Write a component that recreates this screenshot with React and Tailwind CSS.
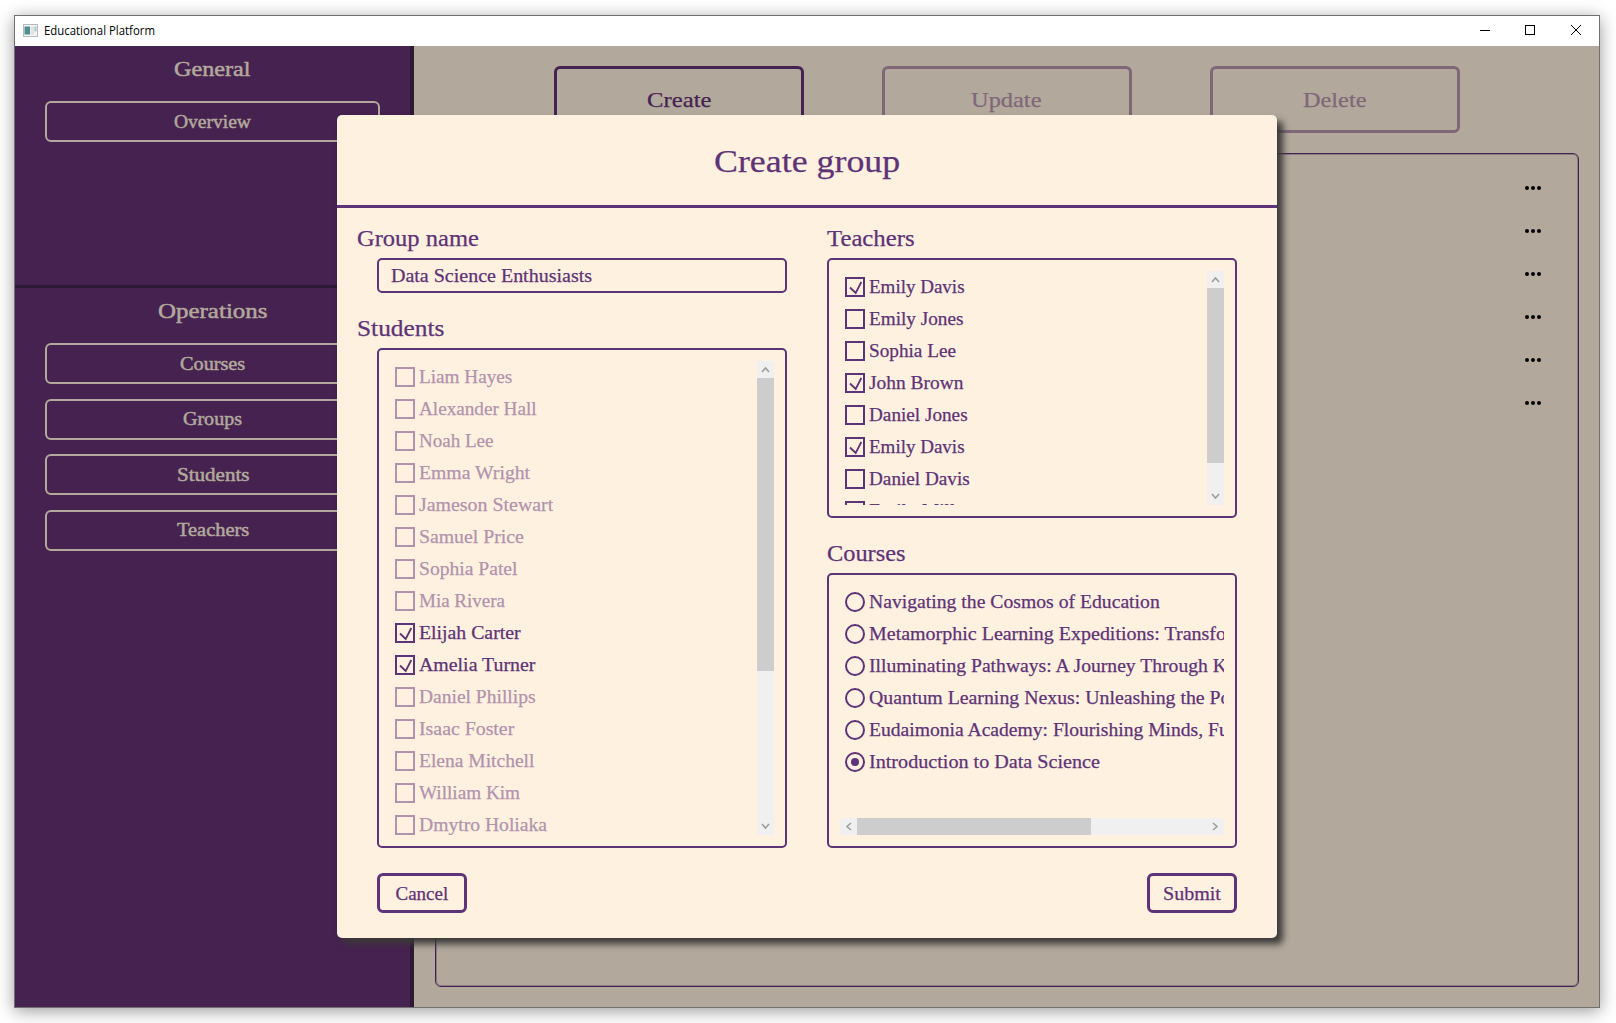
import { useLayoutEffect, useRef, useState } from 'react';

const students = [
  ['Liam Hayes', 93], ['Alexander Hall', 118], ['Noah Lee', 74], ['Emma Wright', 111],
  ['Jameson Stewart', 134], ['Samuel Price', 105], ['Sophia Patel', 99], ['Mia Rivera', 86],
  ['Elijah Carter', 102, true], ['Amelia Turner', 116, true], ['Daniel Phillips', 116],
  ['Isaac Foster', 95], ['Elena Mitchell', 115], ['William Kim', 101], ['Dmytro Holiaka', 128],
];

const teachers = [
  ['Emily Davis', 96, true], ['Emily Jones', 94], ['Sophia Lee', 87], ['John Brown', 94, true],
  ['Daniel Jones', 99], ['Emily Davis', 96, true], ['Daniel Davis', 101], ['Emily Miller', 102],
];

const courses = [
  ['Navigating the Cosmos of Education', 291],
  ['Metamorphic Learning Expeditions: Transforming', 405],
  ['Illuminating Pathways: A Journey Through Knowledge', 434],
  ['Quantum Learning Nexus: Unleashing the Power', 391],
  ['Eudaimonia Academy: Flourishing Minds, Futures', 398],
  ['Introduction to Data Science', 231, true],
];

const operations = [['Courses', 65], ['Groups', 59], ['Students', 72], ['Teachers', 72]];

const outlineButton = 'flex h-10 w-[90px] items-center justify-center rounded-[6px] border-3 border-[#5e3377]';
const actionButton = 'flex h-[67px] w-[250px] items-center justify-center rounded-[6px] border-3 border-current';

/* One line of text, set wider or narrower so that it fills w pixels. */
function Fit({ children, w, className = 'text-[19px] leading-6 pb-px' }) {
  const ref = useRef(null);
  const [scale, setScale] = useState(1);
  useLayoutEffect(() => {
    setScale(w / ref.current.offsetWidth);
  }, [w, children]);
  return (
    <span className={`block shrink-0 whitespace-nowrap ${className}`} style={{ width: w }}>
      <span ref={ref} className="inline-block origin-left" style={{ transform: `scaleX(${scale})` }}>
        {children}
      </span>
    </span>
  );
}

function Chevron({ className = '' }) {
  return (
    <svg viewBox="0 0 17 17" className={`size-[17px] shrink-0 fill-none stroke-[#9b9b9b] ${className}`} strokeWidth="1.5">
      <path d="M5 11 L8.5 7 L12 11" />
    </svg>
  );
}

function CheckRow({ row, dim, radio }) {
  const [label, w, on] = row;
  return (
    <div className={`flex h-8 shrink-0 items-center gap-1 ${dim && !on ? 'text-[#b193ae]' : 'text-[#5e3377]'}`}>
      <span className={`flex size-5 shrink-0 items-center justify-center border-2 border-current ${radio ? 'rounded-full' : ''}`}>
        {on && radio && <span className="size-2 rounded-full bg-current" />}
        {on && !radio && (
          <svg viewBox="0 0 16 16" className="size-4 fill-none stroke-current" strokeWidth="1.8">
            <path d="M3 8.5 L8.7 14 L14.3 3" />
          </svg>
        )}
      </span>
      <Fit w={w}>{label}</Fit>
    </div>
  );
}

function VScroll({ thumb }) {
  return (
    <div className="flex w-[17px] shrink-0 flex-col bg-[#f0f0f0]">
      <Chevron />
      <div className={`bg-[#cdcdcd] ${thumb}`} />
      <Chevron className="mt-auto rotate-180" />
    </div>
  );
}

function Label({ children, w }) {
  return (
    <div className="flex h-[26px] items-center">
      <Fit w={w} className="pt-[2px] text-[22.5px] leading-[26px]">{children}</Fit>
    </div>
  );
}

function SideButton({ children, w }) {
  return (
    <div className="flex h-[41px] w-[335px] items-center justify-center rounded-[6px] border-2 border-[#b2a99c]">
      <Fit w={w} className="text-[19px] leading-6">{children}</Fit>
    </div>
  );
}

function Modal() {
  return (
    <div className="absolute top-[115px] left-[337px] flex h-[823px] w-[940px] flex-col rounded-[5px] bg-[#fff1df] text-[#5e3377] shadow-[6px_6px_7px_#3a3938] [-webkit-text-stroke:0.25px]">
      <div className="flex h-[93px] shrink-0 items-center justify-center border-b-3 border-[#5e3377]">
        <Fit w={186} className="pt-px text-[32px] leading-10">Create group</Fit>
      </div>
      <div className="flex gap-10 pt-[17px] pr-10 pl-5">
        <div className="w-[430px]">
          <Label w={122}>Group name</Label>
          <div className="mt-[7px] ml-5 flex h-[35px] items-center rounded-[5px] border-2 border-[#5e3377] pl-3">
            <Fit w={201} className="text-[19px] leading-6">Data Science Enthusiasts</Fit>
          </div>
          <div className="mt-[22px]"><Label w={88}>Students</Label></div>
          <div className="mt-[7px] ml-5 flex h-[500px] justify-between rounded-[5px] border-2 border-[#5e3377] py-[11px] pr-[11px] pl-4">
            <div className="overflow-hidden">
              {students.map((s) => <CheckRow key={s[0]} row={s} dim />)}
            </div>
            <VScroll thumb="h-[293px]" />
          </div>
        </div>
        <div className="w-[410px]">
          <Label w={88}>Teachers</Label>
          <div className="mt-[7px] flex h-[260px] justify-between rounded-[5px] border-2 border-[#5e3377] py-[11px] pr-[11px] pl-4">
            <div className="overflow-hidden">
              {teachers.map((t, i) => <CheckRow key={i} row={t} />)}
            </div>
            <VScroll thumb="h-[175px]" />
          </div>
          <div className="mt-[22px]"><Label w={79}>Courses</Label></div>
          <div className="mt-[7px] flex h-[275px] flex-col justify-between rounded-[5px] border-2 border-[#5e3377] p-[11px]">
            <div className="overflow-hidden pl-[5px]">
              {courses.map((c) => <CheckRow key={c[0]} row={c} radio />)}
            </div>
            <div className="flex h-[17px] bg-[#f0f0f0]">
              <Chevron className="-rotate-90" />
              <div className="w-[234px] bg-[#cdcdcd]" />
              <Chevron className="ml-auto rotate-90" />
            </div>
          </div>
        </div>
      </div>
      <div className="mt-[25px] flex justify-between px-10">
        <button className={outlineButton}><Fit w={53} className="pt-[2px] text-left text-[19px] leading-6">Cancel</Fit></button>
        <button className={outlineButton}><Fit w={58} className="pt-[2px] text-left text-[19px] leading-6">Submit</Fit></button>
      </div>
    </div>
  );
}

export default function App() {
  return (
    <div className="relative h-[1023px] w-[1616px] overflow-hidden bg-white pt-[15px] pl-[14px] font-['Liberation_Serif',serif]">
      <div className="flex h-[993px] w-[1586px] flex-col border border-[#707070] bg-white shadow-[0_3px_16px_rgba(0,0,0,0.4)]">
        <div className="flex h-[30px] shrink-0 items-center justify-between pl-2">
          <div className="flex items-center gap-[6px] text-black">
            <svg viewBox="0 0 15 13" className="mb-[2px] h-[13px] w-[15px]">
              <rect x="0.5" y="0.5" width="14" height="12" fill="#f2f4f5" stroke="#b4bac0" />
              <rect x="1.5" y="2.5" width="5.5" height="8" fill="#4f8f92" />
              <rect x="7.5" y="2.5" width="3.5" height="8" fill="#e2e2e2" />
              <rect x="11.5" y="2.5" width="2" height="5" fill="#a9cbbd" />
            </svg>
            <Fit w={111} className="font-['Open_Sans',sans-serif] text-xs leading-4">Educational Platform</Fit>
          </div>
          <svg width="102" height="12" viewBox="0 0 102 12" className="mr-[17px] mb-[2px] fill-none stroke-black" strokeWidth="1">
            <path d="M0 6.5H10" />
            <rect x="45.5" y="1.5" width="9" height="9" />
            <path d="M91 1L101 11M101 1L91 11" />
          </svg>
        </div>
        <div className="flex min-h-0 flex-1">
          <aside className="flex w-[399px] shrink-0 flex-col border-r-4 border-[#2d1935] bg-[#462250] text-[#b2a99c] [-webkit-text-stroke:0.5px]">
            <div className="flex h-[242px] shrink-0 flex-col items-center border-b-3 border-[#2d1935] pt-[9px]">
              <Fit w={77} className="text-[22px] leading-7">General</Fit>
              <div className="mt-[18px]"><SideButton w={77}>Overview</SideButton></div>
            </div>
            <div className="flex flex-col items-center pt-[9px]">
              <Fit w={110} className="text-[22px] leading-7">Operations</Fit>
              <div className="mt-[18px] flex flex-col gap-[14.6px]">
                {operations.map(([label, w]) => <SideButton key={label} w={w}>{label}</SideButton>)}
              </div>
            </div>
          </aside>
          <main className="flex flex-1 flex-col bg-[#b2a99c] p-5">
            <div className="flex justify-center gap-[78px] text-[#462250] [-webkit-text-stroke:0.25px]">
              <div className={actionButton}><Fit w={64} className="text-[22px] leading-7">Create</Fit></div>
              <div className={`${actionButton} text-[#7f677a]`}><Fit w={71} className="text-[22px] leading-7">Update</Fit></div>
              <div className={`${actionButton} text-[#7f677a]`}><Fit w={63} className="text-[22px] leading-7">Delete</Fit></div>
            </div>
            <div className="mt-5 ml-px flex flex-1 flex-col items-end gap-[38px] rounded-[6px] border border-[#462250] pt-8 pr-[37px] shadow-[inset_0_0_0_1px_rgba(70,34,80,0.35)]">
              {[0, 1, 2, 3, 4, 5].map((i) => (
                <div key={i} className="flex h-[5px] gap-[2px]">
                  <span className="size-1 rounded-full bg-black" />
                  <span className="size-1 rounded-full bg-black" />
                  <span className="size-1 rounded-full bg-black" />
                </div>
              ))}
            </div>
          </main>
        </div>
      </div>
      <Modal />
    </div>
  );
}
